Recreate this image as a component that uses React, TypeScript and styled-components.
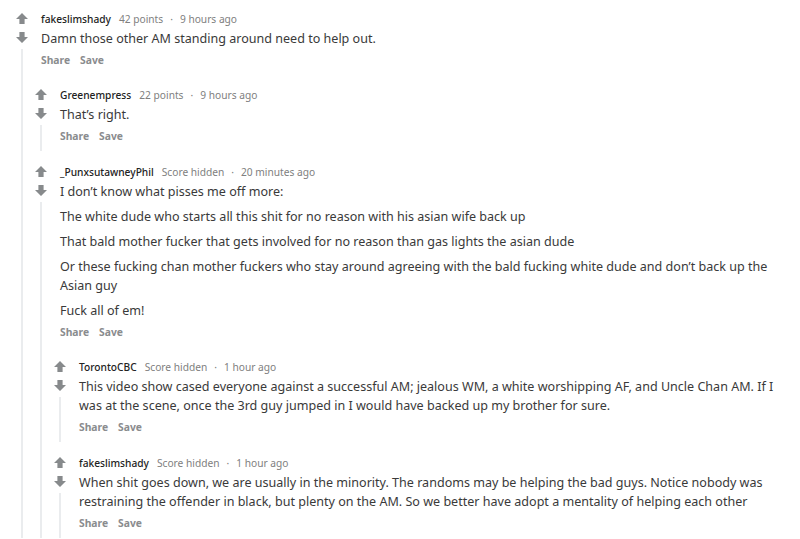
import React from 'react';
import styled, { createGlobalStyle } from 'styled-components';

const GlobalStyle = createGlobalStyle`
  html, body { margin: 0; padding: 0; background: #ffffff; }
  body {
    font-family: "Noto Sans", "Liberation Sans", Arial, sans-serif;
  }
`;

type CommentData = {
  author: string;
  score: string;
  time: string;
  paragraphs: string[];
  children?: CommentData[];
};

const comments: CommentData[] = [
  {
    author: 'fakeslimshady',
    score: '42 points',
    time: '9 hours ago',
    paragraphs: ['Damn those other AM standing around need to help out.'],
    children: [
      {
        author: 'Greenempress',
        score: '22 points',
        time: '9 hours ago',
        paragraphs: ['That\u2019s right.'],
      },
      {
        author: '_PunxsutawneyPhil',
        score: 'Score hidden',
        time: '20 minutes ago',
        paragraphs: [
          'I don\u2019t know what pisses me off more:',
          'The white dude who starts all this shit for no reason with his asian wife back up',
          'That bald mother fucker that gets involved for no reason than gas lights the asian dude',
          'Or these fucking chan mother fuckers who stay around agreeing with the bald fucking white dude and don\u2019t back up the Asian guy',
          'Fuck all of em!',
        ],
        children: [
          {
            author: 'TorontoCBC',
            score: 'Score hidden',
            time: '1 hour ago',
            paragraphs: [
              'This video show cased everyone against a successful AM; jealous WM, a white worshipping AF, and Uncle Chan AM. If I was at the scene, once the 3rd guy jumped in I would have backed up my brother for sure.',
            ],
          },
          {
            author: 'fakeslimshady',
            score: 'Score hidden',
            time: '1 hour ago',
            paragraphs: [
              'When shit goes down, we are usually in the minority. The randoms may be helping the bad guys. Notice nobody was restraining the offender in black, but plenty on the AM. So we better have adopt a mentality of helping each other',
            ],
          },
        ],
      },
    ],
  },
];

const Page = styled.div`
  box-sizing: border-box;
  height: 539px;
  overflow: hidden;
  padding: 11px 16px 0 12px;
`;

const Thread = styled.div`
  display: flex;
  align-items: stretch;
`;

const Rail = styled.div`
  flex: none;
  width: 19px;
  display: flex;
  flex-direction: column;
  align-items: center;
  padding-top: 2px;
`;

const VoteIcon = styled.svg<{ $down?: boolean }>`
  display: block;
  width: 12px;
  height: 11px;
  flex: none;
  fill: #878a8c;
  margin-top: ${(p) => (p.$down ? '8px' : '0')};
  transform: ${(p) => (p.$down ? 'rotate(180deg)' : 'none')};
`;

const ThreadLine = styled.div`
  flex: 1;
  align-self: flex-start;
  width: 2px;
  margin-left: 9px;
  margin-top: 6px;
  background: #eaecee;
`;

const Main = styled.div`
  flex: 1;
  min-width: 0;
  display: flex;
  flex-direction: column;
`;

const Content = styled.div`
  padding-left: 10px;
  padding-bottom: 7px;
`;

const Meta = styled.div`
  display: flex;
  align-items: center;
  white-space: nowrap;
  font-size: 10.2px;
  line-height: 16px;
  color: #808080;
`;

const Author = styled.span`
  color: #222222;
  font-weight: 500;
  margin-right: 8px;
`;

const Dot = styled.span`
  margin: 0 7px;
`;

const Body = styled.div`
  margin-top: 2px;
  display: flex;
  flex-direction: column;
  gap: 6px;
  font-size: 12.55px;
  line-height: 19px;
  color: #3a3a3a;
`;

const Para = styled.p`
  margin: 0;
`;

const Actions = styled.div`
  margin-top: 4px;
  display: flex;
  gap: 10px;
  font-size: 10.3px;
  line-height: 16px;
  font-weight: 700;
  color: #8a8c8e;
`;

const Children = styled.div`
  display: flex;
  flex-direction: column;
  gap: 13px;
  padding-top: 12px;
`;

const Arrow: React.FC<{ down?: boolean }> = ({ down }) => (
  <VoteIcon $down={down} viewBox="0 0 12 11" aria-hidden="true">
    <path d="M6 0 L12 6 H8.6 V11 H3.4 V6 H0 Z" />
  </VoteIcon>
);

const Comment: React.FC<{ data: CommentData }> = ({ data }) => (
  <Thread>
    <Rail>
      <Arrow />
      <Arrow down />
      <ThreadLine />
    </Rail>
    <Main>
      <Content>
        <Meta>
          <Author>{data.author}</Author>
          <span>{data.score}</span>
          <Dot>·</Dot>
          <span>{data.time}</span>
        </Meta>
        <Body>
          {data.paragraphs.map((p, i) => (
            <Para key={i}>{p}</Para>
          ))}
        </Body>
        <Actions>
          <span>Share</span>
          <span>Save</span>
        </Actions>
      </Content>
      {data.children && data.children.length > 0 && (
        <Children>
          {data.children.map((c, i) => (
            <Comment key={i} data={c} />
          ))}
        </Children>
      )}
    </Main>
  </Thread>
);

export default function App() {
  return (
    <>
      <GlobalStyle />
      <Page>
        {comments.map((c, i) => (
          <Comment key={i} data={c} />
        ))}
      </Page>
    </>
  );
}
